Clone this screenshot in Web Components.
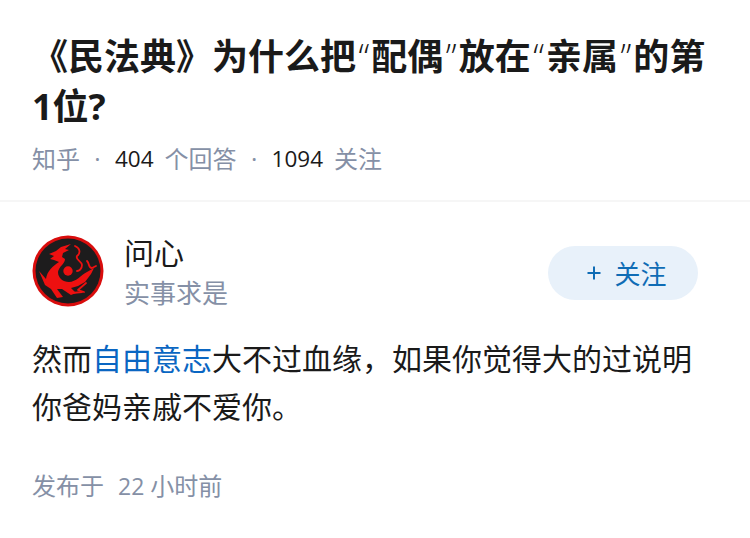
<!DOCTYPE html>
<html lang="zh-CN"><head><meta charset="utf-8">
<style>
html,body{margin:0;padding:0;background:#fff}
body{font-family:"Open Sans","Noto Sans CJK SC",sans-serif;width:750px;height:538px;overflow:hidden}
.q{font-weight:300;padding-left:2.5px;padding-right:2px}
</style></head><body>
<question-header>《民法典》为什么把<span class="q">“</span>配偶<span class="q">”</span>放在<span class="q">“</span>亲属<span class="q">”</span>的第1位?</question-header>
<answer-card></answer-card>
<script>
function def(name,html){customElements.define(name,class extends HTMLElement{constructor(){super();this.attachShadow({mode:'open'}).innerHTML=html}})}
def('question-header',`<style>
:host{display:block;padding:32px 32px 23px;border-bottom:2px solid #f6f6f6;height:145px;box-sizing:content-box}
h1{margin:0;font-size:36px;line-height:50px;font-weight:700;color:#1a1a1a}
.m{margin-top:10px;font-size:24px;line-height:34px;color:#8590a6;display:flex;white-space:pre}
b{font-weight:400;color:#1a1a1a;font-size:22.5px;margin-right:11px}
i{font-style:normal;width:35px;text-align:center}
</style><h1><slot></slot></h1><div class="m"><span>知乎</span><i>·</i><b>404</b><span>个回答</span><i>·</i><b>1094</b><span>关注</span></div>`);
def('dragon-avatar',`<style>:host{display:block;width:72px;height:72px}svg{display:block}</style>
<svg width="72" height="72" viewBox="0 0 72 72"><circle cx="36" cy="36" r="35.5" fill="#d90d0d"/><circle cx="36" cy="36" r="32.5" fill="#1d1c1d"/>
<g fill="#ee1010"><circle cx="36" cy="36" r="4.7"/>
<path d="M17 19L24 16L29 12L39 9L33 14L37 15L31 18L30 22L33 24C33 29 27 31 26 37C26 43 31 47 37 47C44 47 49 40 55 37L62 33L59 39L53 47L46 51L39 53L44 58L39 60L30 54L25 54L31 62L25 63L19 54L13 50L7 36L14 44C15 36 21 31 27 27L22 25L18 24L22 21Z"/></g>
<g fill="none" stroke="#ee1010" stroke-width="1.8" stroke-linecap="round" stroke-linejoin="round"><path d="M43 11C48 13 49 18 45 21C43 25 50 26 50 30C50 34 47 36 45 36"/><path d="M55 26C58 29 56 33 60 33L64 31"/><path d="M54 48L46 55L52 57"/><path d="M40 58L50 57"/></g></svg>`);
def('follow-button',`<style>:host{display:flex;align-items:center;justify-content:center;box-sizing:border-box;width:150px;height:54px;border-radius:27px;background:#e8f1fa;color:#0f6cb5;font-size:26px;white-space:pre;padding-left:6px}
svg{margin-right:13px;margin-left:2px}div{display:flex;align-items:center}</style><div><svg width="14" height="14" viewBox="0 0 14 14"><path d="M7 0.5v13M0.5 7h13" stroke="#0f6cb5" stroke-width="2"/></svg><span>关注</span></div>`);
def('answer-card',`<style>
:host{display:block;padding:33px 32px 0;color:#1a1a1a}
.a{display:flex;align-items:flex-start;height:72px}
.n{flex:1;margin:-1px 0 0 20px}
.n div{font-size:30px;line-height:38px}
.n small{display:block;font-size:26px;line-height:36px;color:#8590a6;margin-top:3px}
follow-button{margin:11px 20px 0 0}
p{margin:28px 0 0;font-size:30px;line-height:48px;width:670px}
a{color:#0a66c2;text-decoration:none}
.t{margin-top:38px;font-size:24px;line-height:34px;color:#8590a6;white-space:pre}
.t span{font-size:23px;margin:0 6px 0 14px}
</style><div class="a"><dragon-avatar></dragon-avatar><div class="n"><div>问心</div><small>实事求是</small></div><follow-button></follow-button></div>
<p>然而<a>自由意志</a>大不过血缘，如果你觉得大的过说明你爸妈亲戚不爱你。</p><div class="t">发布于<span>22</span>小时前</div>`);
</script></body></html>
